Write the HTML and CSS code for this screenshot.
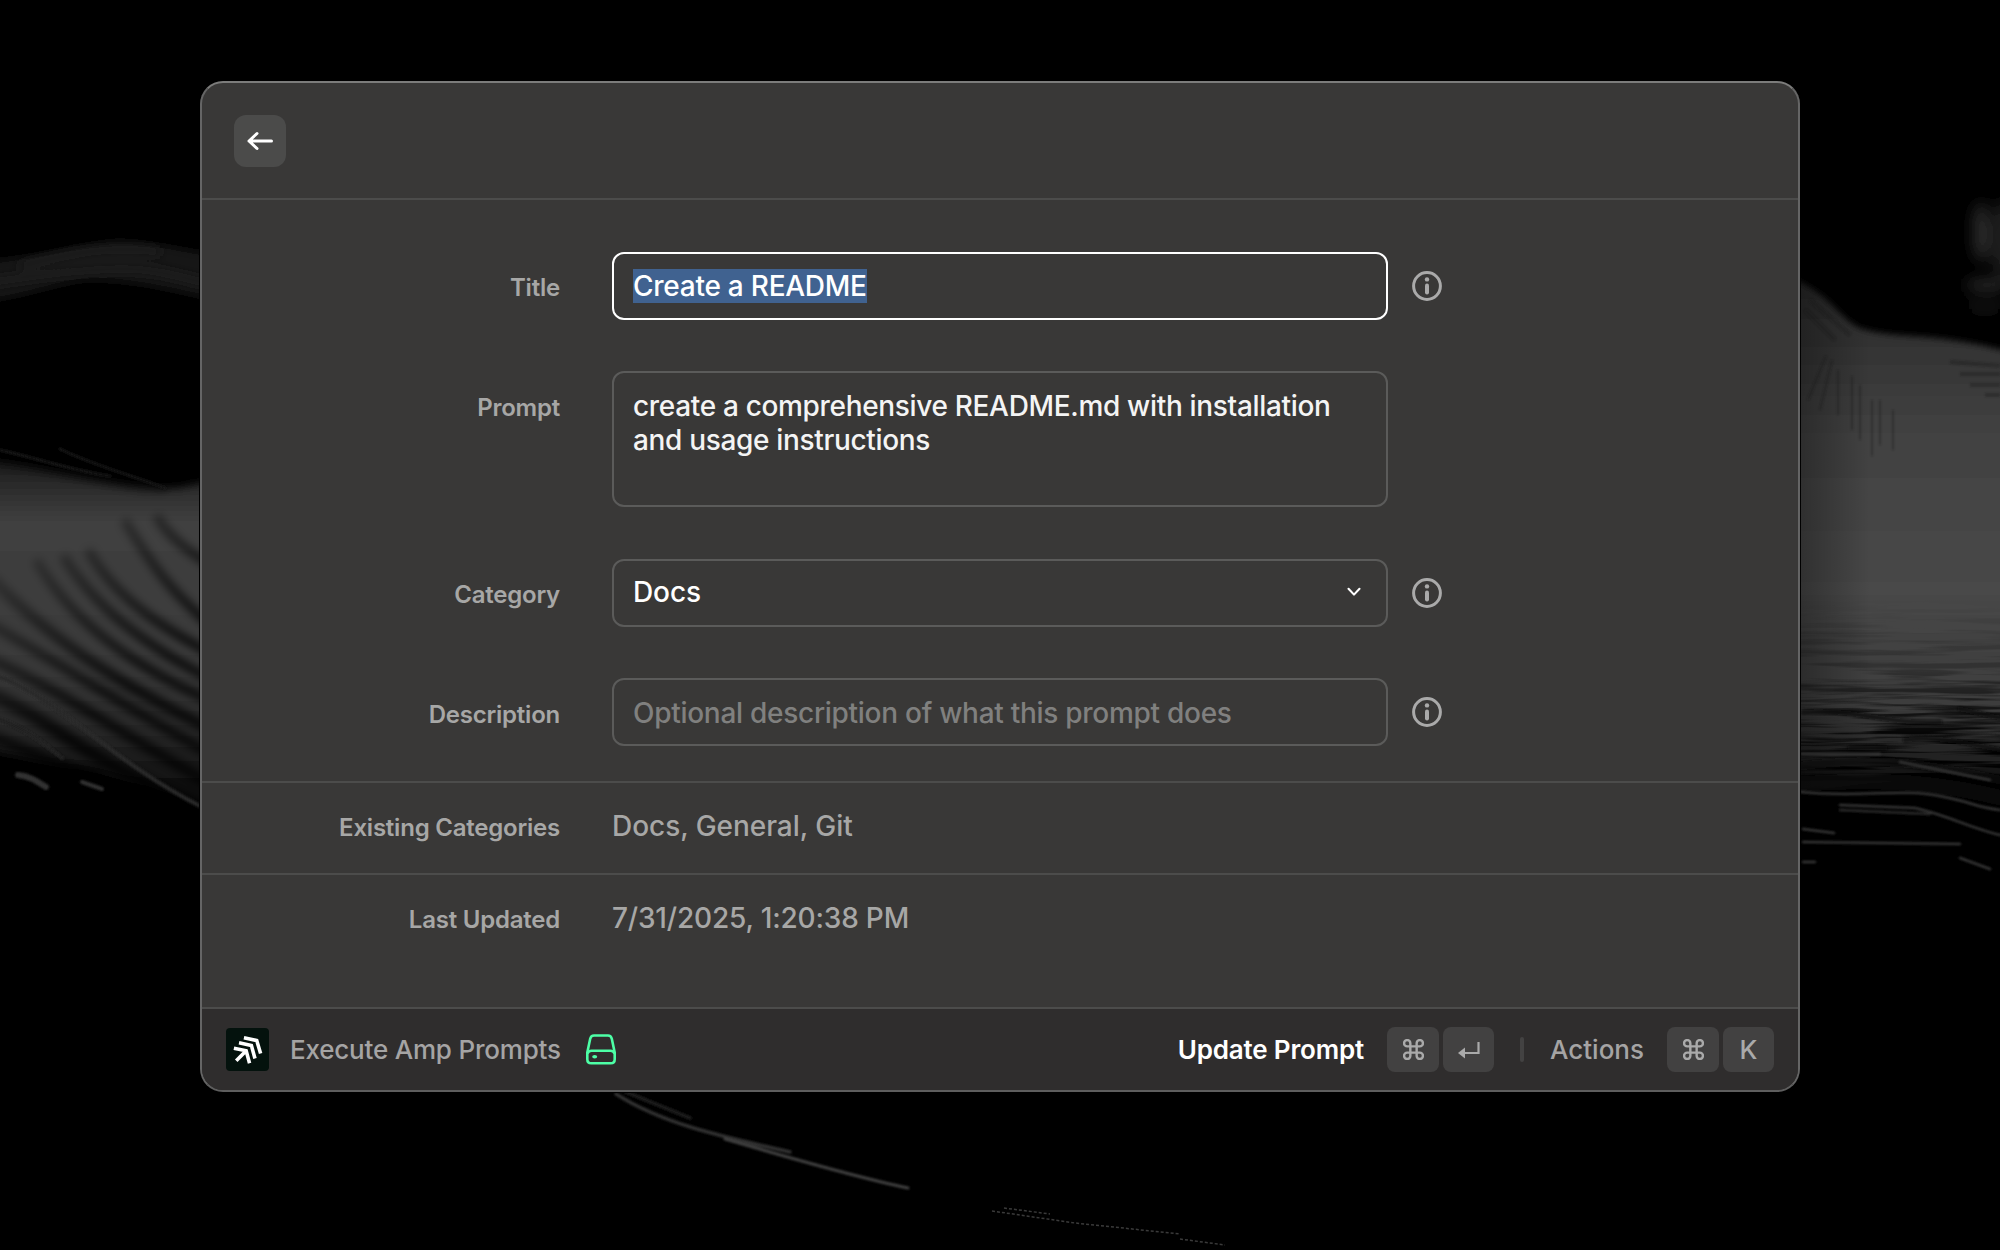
FILE: index.html
```html
<!DOCTYPE html>
<html lang="en">
<head>
<meta charset="utf-8">
<title>Update Prompt</title>
<link rel="stylesheet" href="styles.css">
</head>
<body>
<svg class="wallpaper" viewBox="0 0 2000 1250" aria-hidden="true">
  <defs>
    <filter id="b2" x="-20%" y="-20%" width="140%" height="140%"><feGaussianBlur stdDeviation="1.2"/></filter>
    <filter id="b3" x="-20%" y="-20%" width="140%" height="140%"><feGaussianBlur stdDeviation="3"/></filter>
    <filter id="b4" x="-20%" y="-20%" width="140%" height="140%"><feGaussianBlur stdDeviation="4"/></filter>
    <filter id="b8" filterUnits="userSpaceOnUse" x="1930" y="160" width="100" height="180"><feGaussianBlur stdDeviation="7"/></filter>
    <filter id="streaks" x="0" y="0" width="100%" height="100%">
      <feTurbulence type="fractalNoise" baseFrequency=".008 .16" numOctaves="3" seed="4"/>
      <feColorMatrix values="0 0 0 0 0  0 0 0 0 0  0 0 0 0 0  5 0 0 0 -2.2"/>
    </filter>
    <linearGradient id="dune" x1="0" y1="460" x2="0" y2="810" gradientUnits="userSpaceOnUse">
      <stop offset="0" stop-color="#1c1c1c"/><stop offset=".18" stop-color="#404040"/><stop offset=".6" stop-color="#393939"/><stop offset=".78" stop-color="#262626"/><stop offset=".9" stop-color="#131313"/><stop offset="1" stop-color="#040404"/>
    </linearGradient>
    <linearGradient id="groove" x1="20" y1="560" x2="120" y2="690" gradientUnits="userSpaceOnUse">
      <stop offset="0" stop-color="#000" stop-opacity=".25"/><stop offset="1" stop-color="#000" stop-opacity=".8"/>
    </linearGradient>
    <linearGradient id="rightFade" x1="1800" y1="0" x2="1870" y2="0" gradientUnits="userSpaceOnUse">
      <stop offset="0" stop-color="#000" stop-opacity=".32"/><stop offset="1" stop-color="#000" stop-opacity="0"/>
    </linearGradient>
    <linearGradient id="sea" x1="0" y1="280" x2="0" y2="800" gradientUnits="userSpaceOnUse">
      <stop offset="0" stop-color="#2a2a2a"/><stop offset=".12" stop-color="#333"/><stop offset=".3" stop-color="#424242"/><stop offset=".6" stop-color="#484848"/><stop offset=".82" stop-color="#3c3c3c"/><stop offset=".92" stop-color="#222"/><stop offset="1" stop-color="#000"/>
    </linearGradient>
    <linearGradient id="streakFade" x1="0" y1="600" x2="0" y2="740" gradientUnits="userSpaceOnUse">
      <stop offset="0" stop-color="#000"/><stop offset=".5" stop-color="#3a3a3a"/><stop offset="1" stop-color="#eee"/>
    </linearGradient>
    <mask id="streakMask" maskUnits="userSpaceOnUse" x="1790" y="600" width="210" height="200"><rect x="1790" y="600" width="210" height="200" fill="url(#streakFade)"/></mask>
  </defs>
  <path d="M-20 262C40 258 80 242 122 241C160 243 180 250 225 256V302C170 290 140 281 90 280C60 282 30 296-20 302Z" fill="#171717" filter="url(#b4)"/>
  <g fill="none" stroke="#1d1d1d" stroke-width="8" filter="url(#b4)">
    <path d="M-20 284C60 272 85 270 118 269C150 268 170 274 225 288"/>
    <path d="M20 266C80 252 110 246 160 252"/>
  </g>
  <path d="M-20 460C60 470 130 494 180 488L225 478V816C150 785 100 768 60 764L-20 748Z" fill="url(#dune)" filter="url(#b4)"/>
  <g fill="none" stroke="url(#groove)" stroke-width="9" filter="url(#b4)">
    <path d="M-10 466C60 472 110 488 165 490" stroke-width="5"/>
    <path d="M156 516C168 535 184 550 220 570"/>
    <path d="M124 520C144 550 164 590 220 632"/>
    <path d="M88 550C112 592 152 624 220 658"/>
    <path d="M63 556C92 602 136 642 220 684"/>
    <path d="M36 560C72 622 132 667 220 705"/>
    <path d="M-10 577C50 640 120 685 220 734" stroke-width="11"/>
    <path d="M-10 624C70 670 130 710 220 759"/>
    <path d="M-10 659C70 695 130 740 220 789" stroke-width="10"/>
    <path d="M-10 694C60 724 80 760 220 816" stroke-width="14"/>
    <path d="M-10 736C40 755 60 768 100 778" stroke-width="12"/>
  </g>
  <g fill="none" stroke="#303030" stroke-width="4" stroke-linecap="round" filter="url(#b2)">
    <path d="M0 677C60 700 110 760 200 806" stroke="#2a2a2a"/>
    <path d="M0 720C30 730 45 745 62 758" stroke="#242424"/>
    <path d="M18 775C30 776 38 782 46 787" stroke-width="6"/>
    <path d="M82 782L102 789"/>
    <path d="M60 449C90 464 130 475 165 488" stroke="#161616" stroke-width="3"/>
    <path d="M0 450C40 459 70 470 110 476" stroke="#161616" stroke-width="3"/>
  </g>

  <path d="M1780 276C1825 284 1840 322 1862 329C1900 340 1940 331 2020 355V780C1960 768 1910 778 1780 795Z" fill="url(#sea)" filter="url(#b3)"/>
  <path d="M1795 270H1880V800H1795Z" fill="url(#rightFade)"/>
  <g fill="none" stroke="#151515" stroke-width="2" opacity=".35" filter="url(#b2)">
    <path d="M1826 356L1808 400M1832 360L1820 410M1838 370V415M1852 376V430M1860 385V440M1872 400V456M1880 400V445M1893 410V450"/>
    <path d="M1810 300L1850 335M1805 310L1835 340M1950 362L2000 366M1960 374H2000M1970 385H2000M1985 395H2000" stroke-width="4"/>
  </g>
  <g mask="url(#streakMask)"><rect x="1790" y="600" width="210" height="200" filter="url(#streaks)"/></g>
  <g fill="none" stroke="#080808" stroke-width="5" stroke-linecap="round" opacity=".7" filter="url(#b2)">
    <path d="M1803 712C1850 708 1890 725 1940 722"/>
    <path d="M1960 709L2000 718M1850 748H1885M1905 740C1940 736 1960 742 2000 750"/>
    <path d="M1801 766C1880 755 1930 765 2000 780" stroke-width="9"/>
    <path d="M1801 784C1880 778 1940 782 2010 800" stroke-width="16"/>
  </g>
  <g fill="none" stroke="#343434" stroke-width="2.5" stroke-linecap="round" filter="url(#b2)">
    <path d="M1801 792C1860 798 1900 788 1940 796S1970 806 2000 810"/>
    <path d="M1840 805L1915 808C1950 816 1970 828 2000 835"/>
    <path d="M1840 810L1930 814" stroke="#292929"/>
    <path d="M1803 829L1834 833M1803 842L1960 844M1803 862H1815M1960 858L1990 869"/>
    <path d="M1801 754H1880M1900 762L1990 780"/>
  </g>
  <g fill="#292929" filter="url(#b8)">
    <ellipse cx="1981" cy="232" rx="8" ry="30"/>
    <ellipse cx="1987" cy="285" rx="22" ry="6"/>
    <ellipse cx="1985" cy="306" rx="18" ry="6" fill="#161616"/>
    <ellipse cx="2004" cy="240" rx="14" ry="40" fill="#1a1a1a"/>
  </g>

  <g fill="none" stroke-linecap="round" filter="url(#b2)">
    <path d="M616 1094C660 1122 710 1134 790 1152" stroke="#303030" stroke-width="3.5"/>
    <path d="M626 1092L690 1118" stroke="#1c1c1c" stroke-width="4"/>
    <path d="M725 1139C790 1158 860 1178 908 1188" stroke="#404040" stroke-width="3"/>
  </g>
  <path d="M992 1211L1075 1223L1180 1234M1004 1208L1050 1214M1180 1239L1225 1245" fill="none" stroke="#3a3a3a" stroke-width="1.5" stroke-dasharray="3 2"/>
</svg>

<main class="window">
  <header class="header">
    <button class="back" aria-label="Back">
      <svg width="28" height="20" viewBox="0 0 28 20"><path d="M25.5 10H3M11 2.5L3 10L11 17.5" fill="none" stroke="#fff" stroke-width="3" stroke-linecap="round" stroke-linejoin="round"/></svg>
    </button>
  </header>

  <section class="form">
    <div class="row">
      <span class="label">Title</span>
      <div class="field focused"><span class="selection">Create a README</span></div>
      <svg class="info" viewBox="0 0 30 30"><circle cx="15" cy="15" r="13.4"/><path d="M15 14.6V21.6"/><circle class="dot" cx="15" cy="8.4" r="2.2"/></svg>
    </div>
    <div class="row">
      <span class="label low">Prompt</span>
      <div class="field area">create a comprehensive README.md with installation and usage instructions</div>
    </div>
    <div class="row">
      <span class="label">Category</span>
      <div class="field select"><span>Docs</span>
        <svg width="14" height="10" viewBox="0 0 14 10"><path d="M1.5 1.8L7 7.6L12.5 1.8" fill="none" stroke="#fff" stroke-width="2.1" stroke-linecap="round" stroke-linejoin="round"/></svg>
      </div>
      <svg class="info" viewBox="0 0 30 30"><circle cx="15" cy="15" r="13.4"/><path d="M15 14.6V21.6"/><circle class="dot" cx="15" cy="8.4" r="2.2"/></svg>
    </div>
    <div class="row">
      <span class="label low">Description</span>
      <div class="field placeholder">Optional description of what this prompt does</div>
      <svg class="info" viewBox="0 0 30 30"><circle cx="15" cy="15" r="13.4"/><path d="M15 14.6V21.6"/><circle class="dot" cx="15" cy="8.4" r="2.2"/></svg>
    </div>
  </section>

  <section class="meta"><span class="label">Existing Categories</span><span class="value">Docs, General, Git</span></section>
  <section class="meta last"><span class="label">Last Updated</span><span class="value date">7/31/2025, 1:20:38 PM</span></section>

  <footer class="footer">
    <svg class="logo" viewBox="0 0 42 42"><rect width="42" height="42" rx="4" fill="#04120d"/><path d="M17.5 9.5L30 12.2L33.8 25M12.7 14.5L24.8 17.2L28.3 29.8M7.7 19.7L19.7 22.2L23 34.5M19.7 22.2L10 32" fill="none" stroke="#fff" stroke-width="3.5"/></svg>
    <span class="command">Execute Amp Prompts</span>
    <svg class="drive" viewBox="0 0 30 31"><g fill="none" stroke="#4dffa6" stroke-width="2.6" stroke-linejoin="round"><path d="M8 1.5H22C24.2 1.5 25.3 2.7 25.8 4.8L28.7 18.5V25.2C28.7 28 27.3 29.3 24.8 29.3H5.2C2.7 29.3 1.3 28 1.3 25.2V18.5L4.2 4.8C4.7 2.7 5.8 1.5 8 1.5Z"/><path d="M1.5 19.5C2.3 17.5 3.5 16.7 5.5 16.7H24.5C26.5 16.7 27.7 17.5 28.5 19.5"/></g><ellipse cx="8.7" cy="22.7" rx="2.5" ry="1.8" fill="#4dffa6"/></svg>
    <span class="primary">Update Prompt</span>
    <span class="keys">
      <kbd><svg class="cmd" viewBox="2 2 20 20"><path d="M15 6v12a3 3 0 1 0 3-3H6a3 3 0 1 0 3 3V6a3 3 0 1 0-3 3h12a3 3 0 1 0-3-3"/></svg></kbd>
      <kbd class="narrow"><svg width="22" height="20" viewBox="0 0 22 20"><path d="M20.5 2V13H6" fill="none" stroke="#aaa" stroke-width="2.2"/><path d="M0 13L7 7.5V18.5Z" fill="#aaa"/></svg></kbd>
    </span>
    <span class="separator"></span>
    <span class="actions">Actions</span>
    <span class="keys">
      <kbd><svg class="cmd" viewBox="2 2 20 20"><path d="M15 6v12a3 3 0 1 0 3-3H6a3 3 0 1 0 3 3V6a3 3 0 1 0-3 3h12a3 3 0 1 0-3-3"/></svg></kbd>
      <kbd class="narrow">K</kbd>
    </span>
  </footer>
</main>
</body>
</html>
```
FILE: styles.css
```css
* { box-sizing: border-box; }

body {
  margin: 0;
  width: 2000px;
  height: 1250px;
  overflow: hidden;
  padding: 81px 0 0 200px;
  background: #000;
  font-family: Inter, "Liberation Sans", sans-serif;
  font-size: 28px;
  font-weight: 450;
  line-height: 34px;
}

.wallpaper {
  position: absolute;
  left: 0;
  top: 0;
  width: 2000px;
  height: 1250px;
}

.window {
  position: relative;
  width: 1600px;
  height: 1011px;
  display: flex;
  flex-direction: column;
  overflow: hidden;
  border: 2px solid #656565;
  border-top-color: #7c7c7b;
  border-bottom-color: #5e5e5e;
  border-radius: 23px;
  background: #393837;
  box-shadow: 0 0 0 1px #000;
}

.header {
  height: 117px;
  padding: 32px 0 0 32px;
  border-bottom: 2px solid #4c4c4b;
}

.back {
  display: flex;
  align-items: center;
  justify-content: center;
  width: 52px;
  height: 52px;
  padding: 0;
  border: 0;
  border-radius: 12px;
  background: #4b4b4a;
}

.form {
  display: flex;
  flex-direction: column;
  gap: 51.4px;
  height: 583px;
  padding-top: 52px;
  border-bottom: 2px solid #4c4c4b;
}

.row {
  display: grid;
  grid-template-columns: 358px 52px 776px 24px 30px;
}
.row .label { grid-column: 1; padding-top: 19px; }
.row .low { padding-top: 20px; }
.row .field { grid-column: 3; }
.row .info { grid-column: 5; }

.label {
  color: #a7a7a6;
  font-size: 24px;
  font-weight: 600;
  letter-spacing: -0.22px;
  line-height: 34px;
  text-align: right;
  white-space: nowrap;
}

.field {
  height: 68px;
  padding: 15px 19px;
  border: 2px solid #5b5b5a;
  border-radius: 12px;
  color: #f4f4f4;
  letter-spacing: -0.25px;
}

.focused { border-color: #fff; color: #fff; }
.selection { background: #406290; }
.area { height: 136px; padding-top: 16px; letter-spacing: -0.33px; }
.select { display: flex; justify-content: space-between; align-items: center; padding: 13px 25px 15px 19px; color: #fff; letter-spacing: -0.1px; }
.placeholder { padding-top: 16px; color: #80807f; letter-spacing: -0.28px; }

.info { width: 30px; height: 30px; margin-top: 19px; fill: none; stroke: #aaa; stroke-width: 3; }
.info path { stroke-width: 4; stroke-linecap: round; }
.info .dot { fill: #aaa; stroke: none; }

.meta {
  display: grid;
  grid-template-columns: 358px 1fr;
  column-gap: 52px;
  height: 92px;
  padding-top: 26px;
  border-bottom: 2px solid #4c4c4b;
}
.meta .label { padding-top: 2px; }
.value { color: #a7a7a6; letter-spacing: -0.05px; }
.date { letter-spacing: -0.18px; }
.last { height: 134px; }

.footer {
  display: flex;
  align-items: center;
  flex: 1;
  padding: 0 24px;
  background: #2f2d2d;
  color: #a5a4a4;
  font-size: 26px;
  font-weight: 500;
}

.logo { width: 43px; height: 43px; margin-right: 21px; }
.command { letter-spacing: -0.2px; }
.drive { width: 30px; height: 31px; margin-left: 25px; }
.primary { margin-left: auto; margin-right: 23px; color: #fff; font-weight: 600; letter-spacing: -0.17px; }
.keys { display: flex; gap: 4px; }

kbd {
  display: flex;
  align-items: center;
  justify-content: center;
  width: 52px;
  height: 45px;
  border-radius: 8px;
  background: #424141;
  color: #aaa;
  font: 450 26px/34px Inter, sans-serif;
}
.narrow { width: 51px; }

.cmd { width: 21px; height: 21px; fill: none; stroke: #aaa; stroke-width: 2.3; }
.separator { width: 4px; height: 25px; margin: 0 26px 0 26px; border-radius: 2px; background: #434242; }
.actions { margin-right: 23px; }
```
